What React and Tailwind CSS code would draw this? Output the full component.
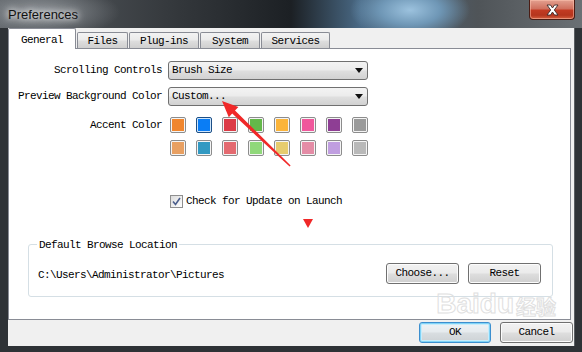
const mono = "font-['Liberation_Mono',monospace] text-[11px] tracking-[-0.6px] text-black";

const accents = [
  "#f0862e", "#0a7df5", "#dc3b46", "#64b84a", "#fbb43a", "#f0589c", "#8e3e94", "#9a9a9a",
  "#e8a062", "#3299c2", "#e46a70", "#90d87a", "#e6cc6e", "#e48ca6", "#c09ee0", "#b9b9b9",
];

function Combo({ value }) {
  return (
    <div className="flex h-[19px] w-[200px] items-center justify-between rounded-[3px] border border-[#707070] bg-[linear-gradient(#f3f3f3,#ececec_45%,#dedede_55%,#d2d2d2)] pl-[3px] pr-[4px]">
      <span className="leading-none">{value}</span>
      <svg width="8" height="5" viewBox="0 0 8 5">
        <path d="M0 0h8L4 5z" fill="#111" />
      </svg>
    </div>
  );
}

function Button({ children, focused, width = "w-[73px]" }) {
  return (
    <button
      className={
        focused
          ? `${width} h-[21px] rounded-[3px] border border-[#3c8fcf] bg-[linear-gradient(#eef3f6,#e6ebee_45%,#d8dde0_55%,#cdd2d5)] shadow-[inset_0_0_0_1px_#7fd3f7,inset_0_0_0_2px_#c8ecfa] leading-none`
          : `${width} h-[21px] rounded-[3px] border border-[#707070] bg-[linear-gradient(#f2f2f2,#ebebeb_45%,#dddddd_55%,#cfcfcf)] shadow-[inset_0_0_0_1px_#fcfcfc] leading-none`
      }
    >
      {children}
    </button>
  );
}

function Tab({ label, active, width }) {
  if (active) {
    return (
      <div className={`${width} flex h-[21px] items-start justify-center rounded-t-[2px] border border-b-0 border-[#898c95] bg-white pt-[3px]`}>
        {label}
      </div>
    );
  }
  return (
    <div className={`${width} mb-[1px] flex h-[16px] items-center justify-center rounded-t-[2px] border border-b-0 border-[#898c95] bg-[linear-gradient(#f3f3f3,#ebebeb_45%,#dddddd_55%,#cfcfcf)] pt-[1px]`}>
      {label}
    </div>
  );
}

export default function App() {
  return (
    <div className={`relative flex h-[352px] w-[582px] flex-col overflow-hidden bg-[#2e3236] ${mono}`}>
      {/* title bar */}
      <div className="flex h-[28px] items-start justify-between bg-[radial-gradient(ellipse_60px_30px_at_410px_10px,#9cc2de,#6f97b6_50%,transparent),radial-gradient(ellipse_80px_26px_at_40px_12px,#8e9398,transparent),linear-gradient(90deg,#5a5f64,#34383c_30%,#1c2024_50%,#4a6a86_62%,#4f5458_82%,#6b7074)]">
        <span className="mt-[5px] pl-[8px] font-['Liberation_Sans',sans-serif] text-[13px] tracking-normal text-[#111] [text-shadow:0_0_6px_#ffffff,0_0_10px_#ffffff]">
          Preferences
        </span>
        <div className="mr-[7px] flex h-[20px] w-[46px] items-center justify-center rounded-b-[4px] border border-t-0 border-[#4a1c14] bg-[linear-gradient(#e3a090,#d0715f_45%,#c23a22_55%,#b5351d_80%,#d45f3f)] shadow-[inset_0_0_0_1px_rgba(255,200,180,0.5)]">
          <svg width="15" height="12" viewBox="0 0 15 12">
            <path
              d="M2 1h3.5L7.5 4 9.5 1H13L9.3 6 13 11H9.5L7.5 8 5.5 11H2L5.7 6z"
              fill="#ffffff"
              stroke="#3a2a2a"
              strokeWidth="0.9"
            />
          </svg>
        </div>
      </div>

      {/* client area */}
      <div className="ml-[8px] mr-[7px] flex h-[318px] flex-col border-r border-[#5a5e62] bg-[#f0f0f0]">
        {/* tabs */}
        <div className="relative z-10 -mb-[1px] flex items-end gap-[1px]">
          <Tab label="General" active width="w-[68px]" />
          <Tab label="Files" width="w-[51px]" />
          <Tab label="Plug-ins" width="w-[70px]" />
          <Tab label="System" width="w-[60px]" />
          <Tab label="Services" width="w-[69px]" />
        </div>

        {/* panel */}
        <div className="relative mr-[3px] flex h-[272px] flex-col border border-[#898c95] bg-white pt-[12px]">
          <div className="flex items-center gap-[6px]">
            <span className="w-[153px] text-right">Scrolling Controls</span>
            <Combo value="Brush Size" />
          </div>
          <div className="mt-[7px] flex items-center gap-[6px]">
            <span className="w-[153px] text-right">Preview Background Color</span>
            <Combo value="Custom..." />
          </div>
          <div className="mt-[11px] flex items-start gap-[6px]">
            <span className="w-[153px] pt-[1px] text-right leading-[14px]">Accent Color</span>
            <div className="ml-[2px] grid grid-cols-8 gap-x-[10px] gap-y-[7px]">
              {accents.map((c, i) => (
                <div
                  key={c}
                  className={
                    i === 1
                      ? "h-[16px] w-[16px] rounded-[2px] border border-[#1d4f86] bg-[#cfe6fb] p-[1px]"
                      : "h-[16px] w-[16px] rounded-[2px] border border-[#8c8c8c] bg-[#f4f4f4] p-[1px]"
                  }
                >
                  <div className="h-full w-full" style={{ backgroundColor: c }} />
                </div>
              ))}
            </div>
          </div>

          <div className="mt-[37px] flex items-center gap-[3px] pl-[161px]">
            <div className="flex h-[13px] w-[13px] items-center justify-center border border-[#8f8f8f] bg-[linear-gradient(135deg,#dcdcdc,#ffffff)]">
              <svg width="9" height="9" viewBox="0 0 9 9">
                <path d="M1 4.5L3.5 7.5 8 1" fill="none" stroke="#4b5e8c" strokeWidth="1.6" />
              </svg>
            </div>
            <span>Check for Update on Launch</span>
          </div>

          {/* group box */}
          <div className="relative ml-[19px] mt-[34px] flex h-[53px] w-[525px] items-start rounded-[3px] border border-[#d5dfe5] pl-[9px] pr-[11px] pt-[18px]">
            <span className="absolute -top-[8px] left-[8px] bg-white px-[2px]">Default Browse Location</span>
            <span className="mt-[4px] flex-1">C:\Users\Administrator\Pictures</span>
            <div className="flex gap-[9px]">
              <Button>Choose...</Button>
              <Button>Reset</Button>
            </div>
          </div>

          {/* watermark */}
          <div className="pointer-events-none absolute bottom-[1px] right-[14px] flex items-end gap-[2px] whitespace-nowrap font-['Liberation_Sans','Noto_Sans_CJK_SC',sans-serif] text-[28px] font-bold leading-none tracking-normal text-transparent [-webkit-text-stroke:1px_#e0e0e0]">
            <span>Baidu</span>
            <span className="text-[20px]">经验</span>
          </div>
        </div>

        {/* bottom strip */}
        <div className="flex flex-1 items-start justify-end gap-[9px] pr-[1px] pt-[2px]">
          <Button focused width="w-[72px]">OK</Button>
          <Button>Cancel</Button>
        </div>
      </div>

      {/* red annotation marks */}
      <svg className="pointer-events-none absolute left-0 top-0" width="582" height="352">
        <polygon
          points="222,101 238.4,107 235,110.6 290.6,165.4 289.6,166.6 232.2,113.5 228.8,117.2"
          fill="#f02828"
        />
        <polygon points="303,219 313,219 308,228" fill="#f02828" />
      </svg>
    </div>
  );
}
